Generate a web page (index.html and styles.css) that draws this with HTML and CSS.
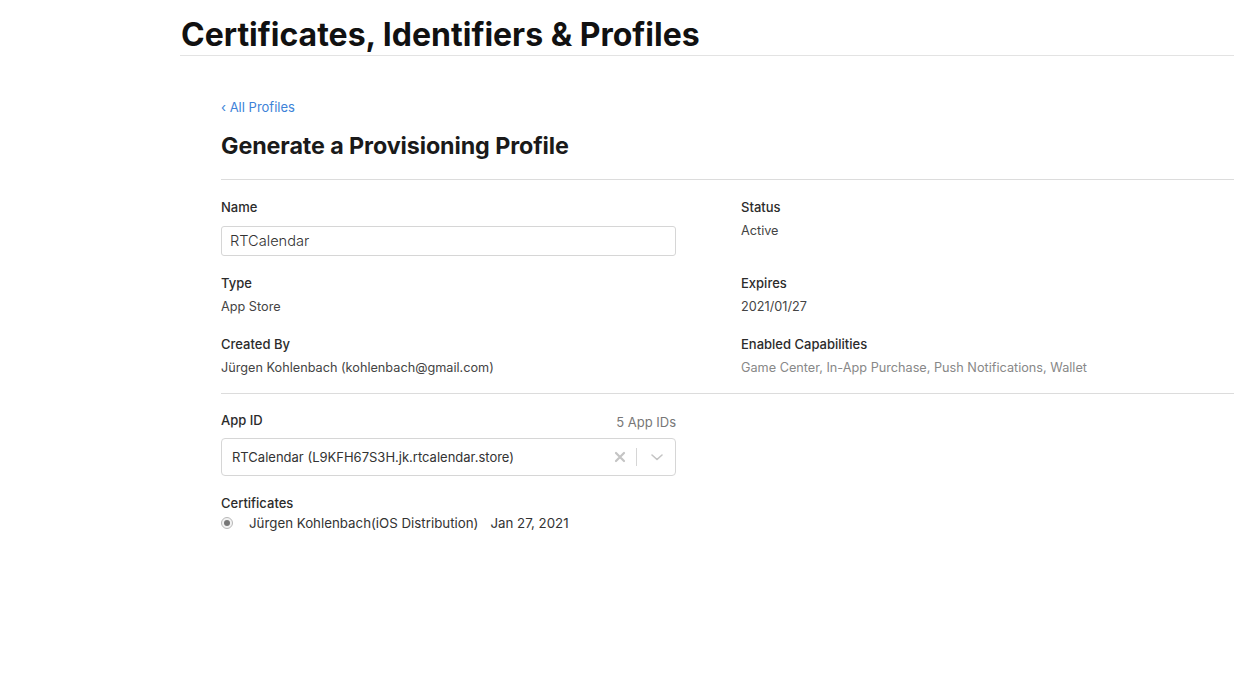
FILE: index.html
```html
<!DOCTYPE html>
<html lang="en">
<head>
    <meta charset="UTF-8">
    <title>Certificates, Identifiers &amp; Profiles</title>
    <link rel="stylesheet" href="styles.css">
</head>
<body>

<div class="header">
    <h1 class="pagetitle">Certificates, Identifiers &amp; Profiles</h1>
</div>

<div class="content">

    <a class="backlink" href="javascript:void(0)">&lsaquo; All Profiles</a>
    <h2 class="formtitle">Generate a Provisioning Profile</h2>

    <div class="details">
        <div class="row row1">
            <div class="cell">
                <div class="label">Name</div>
                <input class="nameinput" value="RTCalendar">
            </div>
            <div class="cell">
                <div class="label">Status</div>
                <div class="value">Active</div>
            </div>
        </div>
        <div class="row row2">
            <div class="cell">
                <div class="label">Type</div>
                <div class="value">App Store</div>
            </div>
            <div class="cell">
                <div class="label">Expires</div>
                <div class="value">2021/01/27</div>
            </div>
        </div>
        <div class="row row3">
            <div class="cell">
                <div class="label">Created By</div>
                <div class="value">Jürgen Kohlenbach (kohlenbach@gmail.com)</div>
            </div>
            <div class="cell">
                <div class="label">Enabled Capabilities</div>
                <div class="value muted">Game Center, In-App Purchase, Push Notifications, Wallet</div>
            </div>
        </div>
    </div>

    <div class="appid">
        <div class="appidhead">
            <span class="label">App ID</span>
            <span class="count">5 App IDs</span>
        </div>
        <div class="select">
            <span class="selectvalue">RTCalendar (L9KFH67S3H.jk.rtcalendar.store)</span>
            <span class="selectclear">
                <svg width="12" height="12" viewBox="0 0 12 12"><path d="M2 2L10 10M10 2L2 10" stroke="#c4c4c4" stroke-width="2.2" stroke-linecap="round"/></svg>
            </span>
            <span class="selectsep"></span>
            <span class="selectarrow">
                <svg width="14" height="10" viewBox="0 0 14 10"><path d="M2 3L7 7.5L12 3" stroke="#c4c4c4" stroke-width="1.6" fill="none" stroke-linecap="round" stroke-linejoin="round"/></svg>
            </span>
        </div>
    </div>

    <div class="certs">
        <div class="label">Certificates</div>
        <div class="certrow">
            <span class="radio"><span class="radiodot"></span></span>
            <span class="certname">Jürgen Kohlenbach(iOS Distribution)</span>
            <span class="certdate">Jan 27, 2021</span>
        </div>
    </div>

</div>

</body>
</html>
```

FILE: styles.css
```css
*{
    margin:0;
    padding:0;
    box-sizing: border-box;
}

body{
    font-family: Inter, "Liberation Sans", sans-serif;
    color: #333;
    background: #fff;
}

.header{
    margin-left: 180px;
    border-bottom: 1px solid #e3e3e3;
    padding-top: 15px;
    height: 56px;
}

.pagetitle{
    font-size: 32px;
    font-weight: 700;
    color: #111;
    line-height: 40px;
    padding-left: 1px;
}

.content{
    margin-left: 221px;
}

.backlink{
    display: block;
    width: fit-content;
    margin-top: 43px;
    font-size: 13px;
    line-height: 16px;
    color: #3d82d8;
    text-decoration: none;
}

.formtitle{
    margin-top: 17px;
    font-size: 23.3px;
    font-weight: 700;
    color: #1a1a1a;
    line-height: 28px;
    letter-spacing: -0.1px;
    padding-bottom: 19px;
    border-bottom: 1px solid #dcdcdc;
}

.details{
    padding-top: 19px;
    padding-bottom: 17px;
    border-bottom: 1px solid #dcdcdc;
}

.row{
    display: flex;
    gap: 65px;
}

.row2{
    margin-top: 19px;
}

.row3{
    margin-top: 21px;
}

.cell{
    width: 455px;
}

.label{
    font-size: 13px;
    font-weight: 450;
    color: #2b2b2b;
    line-height: 16px;
}

.value{
    margin-top: 8px;
    font-size: 12.7px;
    color: #444;
    line-height: 16px;
}

.muted{
    color: #888;
}

.nameinput{
    display: block;
    width: 455px;
    height: 30px;
    margin-top: 11px;
    border: 1px solid #d6d6d6;
    border-radius: 3px;
    padding: 0 8px;
    font-family: Inter, "Liberation Sans", sans-serif;
    font-size: 14.6px;
    font-weight: 350;
    color: #333;
    outline: none;
}

.appid{
    width: 455px;
    padding-top: 18px;
}

.appidhead{
    display: flex;
    justify-content: space-between;
    align-items: flex-end;
}

.count{
    font-size: 13px;
    color: #777;
    line-height: 16px;
    position: relative;
    top: 2px;
}

.select{
    display: flex;
    align-items: center;
    height: 38px;
    margin-top: 10px;
    border: 1px solid #d6d6d6;
    border-radius: 4px;
    padding-left: 10px;
}

.selectvalue{
    flex: 1;
    font-size: 13px;
    color: #333;
}

.selectclear{
    display: flex;
    width: 24px;
    justify-content: center;
}

.selectsep{
    width: 1px;
    height: 18px;
    background: #d6d6d6;
    margin: 0 5px 0 4px;
}

.selectarrow{
    display: flex;
    width: 30px;
    justify-content: center;
    margin-right: 3px;
}

.certs{
    padding-top: 19px;
}

.certrow{
    display: flex;
    align-items: center;
    margin-top: 4px;
    font-size: 13.3px;
    color: #333;
    line-height: 16px;
}

.radio{
    display: flex;
    align-items: center;
    justify-content: center;
    width: 12px;
    height: 12px;
    border: 1px solid #b8b8b8;
    border-radius: 50%;
    background: #f2f2f2;
    margin-right: 16px;
}

.radiodot{
    width: 6px;
    height: 6px;
    border-radius: 50%;
    background: #777;
}

.certdate{
    margin-left: 12px;
}
```
